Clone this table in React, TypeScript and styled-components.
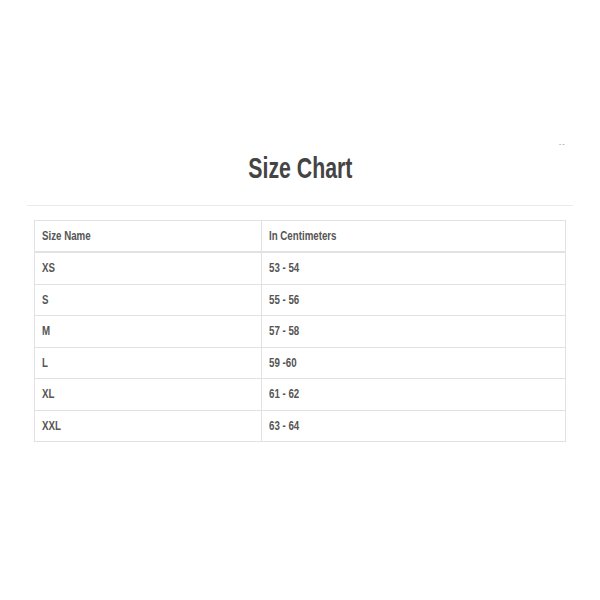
import React from "react";
import styled, { createGlobalStyle } from "styled-components";

const Global = createGlobalStyle`
  html, body { margin: 0; padding: 0; background: #ffffff; }
  body { font-family: "Liberation Sans", Arial, sans-serif; }
`;

const Page = styled.div`
  width: 600px;
  height: 600px;
  box-sizing: border-box;
  padding: 136px 27px 0;
`;

const Header = styled.div`
  position: relative;
  display: flex;
  justify-content: center;
  padding: 14px 0 19px;
  border-bottom: 1px solid #ebebeb;
`;

const Title = styled.h2`
  margin: 0;
  font-family: "Liberation Sans", Arial, sans-serif;
  font-weight: 700;
  font-size: 30px;
  line-height: 36px;
  color: #444444;
  display: inline-block;
  transform: scaleX(0.71);
  transform-origin: center;
`;

const Close = styled.span`
  position: absolute;
  right: 7px;
  top: 4px;
  font-family: "Liberation Sans", Arial, sans-serif;
  font-size: 8px;
  line-height: 8px;
  color: #9a9a9a;
  letter-spacing: 1px;
`;

const Body = styled.div`
  padding: 14px 7px 0;
`;

const Table = styled.table`
  width: 100%;
  border-collapse: collapse;
  border: 1px solid #e2e2e2;
  table-layout: fixed;
`;

const HeadCell = styled.th<{ $w?: string }>`
  text-align: left;
  vertical-align: middle;
  height: 30px;
  padding: 0 7px;
  border: 1px solid #e2e2e2;
  border-bottom: 2px solid #e2e2e2;
  width: ${(p) => p.$w || "auto"};
`;

const Cell = styled.td`
  vertical-align: middle;
  height: 30.5px;
  padding: 0 7px;
  border: 1px solid #e2e2e2;
`;

const Label = styled.span`
  display: block;
  font-family: "Liberation Sans", Arial, sans-serif;
  font-weight: 700;
  font-size: 13.5px;
  line-height: 14px;
  color: #555555;
  transform: scaleX(0.72);
  transform-origin: left center;
  white-space: nowrap;
`;

const rows: [string, string][] = [
  ["XS", "53 - 54"],
  ["S", "55 - 56"],
  ["M", "57 - 58"],
  ["L", "59 -60"],
  ["XL", "61 - 62"],
  ["XXL", "63 - 64"],
];

export default function App() {
  return (
    <>
      <Global />
      <Page>
        <Header>
          <Title>Size Chart</Title>
          <Close>--</Close>
        </Header>
        <Body>
          <Table>
            <thead>
              <tr>
                <HeadCell $w="212px">
                  <Label>Size Name</Label>
                </HeadCell>
                <HeadCell>
                  <Label>In Centimeters</Label>
                </HeadCell>
              </tr>
            </thead>
            <tbody>
              {rows.map(([s, c]) => (
                <tr key={s}>
                  <Cell>
                    <Label>{s}</Label>
                  </Cell>
                  <Cell>
                    <Label>{c}</Label>
                  </Cell>
                </tr>
              ))}
            </tbody>
          </Table>
        </Body>
      </Page>
    </>
  );
}
